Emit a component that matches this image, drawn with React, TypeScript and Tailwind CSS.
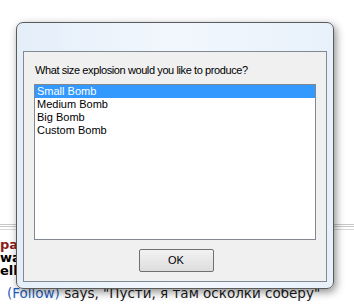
import React from 'react';

const items = ['Small Bomb', 'Medium Bomb', 'Big Bomb', 'Custom Bomb'];

export default function App() {
  return (
    <div className="relative w-[354px] h-[304px] overflow-hidden bg-white font-['DejaVu_Sans',sans-serif]">
      {/* page behind the dialog */}
      <div className="pt-[224px]">
        <div className="h-[3px] border-t border-b border-[#c8c8c8]" />
        <div className="h-[3px] border-b border-[#d8d8d8]" />
        <div className="pt-[8px] text-[13px] font-bold leading-[13px]">
          <div className="text-[#8b1c1c]">pa</div>
          <div className="text-black">wa</div>
          <div className="text-black">ell</div>
        </div>
        <div className="pl-[7px] pt-[8px] text-[13.5px] leading-[16px] text-[#1a1a1a] whitespace-nowrap">
          <span className="text-[#1f5fbf]">(Follow)</span> says, "Пусти, я там осколки соберу"
        </div>
      </div>

      {/* dialog window */}
      <div className="absolute left-[16px] top-[22px] w-[318px] h-[267px] rounded-[7px] border border-[#5b5b5b] bg-gradient-to-r from-[#e4eef9] via-[#f2f7fd] to-[#e8f1fb] shadow-[2px_3px_8px_rgba(0,0,0,0.45)] flex flex-col px-[6px] pb-[6px] pt-[28px]">
        <div className="flex-1 border border-[#7f8a95] bg-[#f0f0f0] flex flex-col font-['Liberation_Sans',sans-serif] text-[11px] text-black">
          <div className="pl-[11px] pt-[12px] leading-[13px] tracking-[-0.4px]">What size explosion would you like to produce?</div>
          <div className="mx-[10px] mt-[7px] h-[156px] border border-[#828790] bg-white leading-[13px]">
            {items.map((t, i) => (
              <div key={t} className={i === 0 ? 'bg-[#3399ff] text-white pl-[2px]' : 'pl-[2px]'}>
                {t}
              </div>
            ))}
          </div>
          <div className="flex justify-center mt-[9px] pl-[2px]">
            <button className="w-[75px] h-[23px] border border-[#707070] rounded-[2px] bg-gradient-to-b from-[#f2f2f2] to-[#dddddd] text-[11px] font-['Liberation_Sans',sans-serif]">
              OK
            </button>
          </div>
        </div>
      </div>
    </div>
  );
}
